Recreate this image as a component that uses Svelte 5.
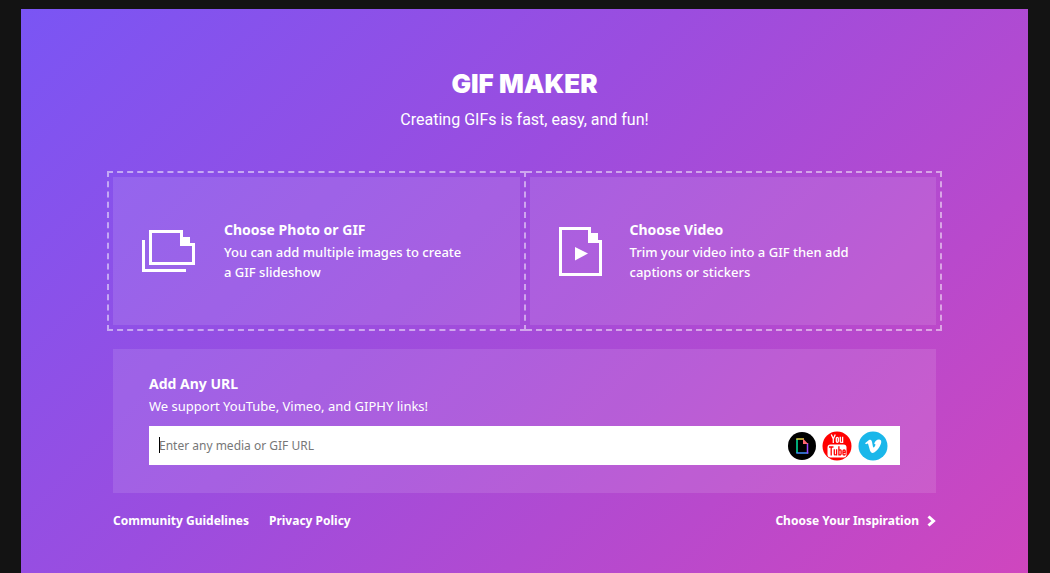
<script lang="ts">
	let url = $state('');
	let urlInput: HTMLInputElement;

	$effect(() => {
		urlInput.focus();
	});
</script>

<main class="page">
	<div class="maker">
		<header>
			<h1>GIF MAKER</h1>
			<p>Creating GIFs is fast, easy, and fun!</p>
		</header>

		<div class="choices">
			<div class="drop-zone">
				<button class="choice" type="button">
					<svg width="54" height="42" viewBox="0 0 54 42">
						<path d="M1.500 10v30.500H44" fill="none" stroke="#fff" stroke-width="3" />
						<path d="M8.500 1.500H39.500V14.500H51.500V33.500H8.500Z" fill="none" stroke="#fff" stroke-width="3" />
						<path d="M38 7h10v9H38z" fill="#fff" />
					</svg>
					<span class="choice-text">
						<strong>Choose Photo or GIF</strong>
						<span>You can add multiple images to create<br />a GIF slideshow</span>
					</span>
				</button>
			</div>
			<div class="drop-zone">
				<button class="choice" type="button">
					<svg width="43" height="49" viewBox="0 0 43 49">
						<path d="M1.500 1.500H30.500V14.500H41.500V47.500H1.500Z" fill="none" stroke="#fff" stroke-width="3" />
						<path d="M29 6h10v10H29z" fill="#fff" />
						<path d="M16 20l13 6.500l-13 7z" fill="#fff" />
					</svg>
					<span class="choice-text">
						<strong>Choose Video</strong>
						<span>Trim your video into a GIF then add<br />captions or stickers</span>
					</span>
				</button>
			</div>
		</div>

		<form class="url-panel">
			<label for="media-url">Add Any URL</label>
			<p>We support YouTube, Vimeo, and GIPHY links!</p>
			<div class="url-box">
				{#if !url}
					<span class="caret" aria-hidden="true"></span>
				{/if}
				<input
					id="media-url"
					type="text"
					placeholder="Enter any media or GIF URL"
					bind:value={url}
					bind:this={urlInput}
				/>
				<svg width="28" height="28" viewBox="0 0 28 28">
					<circle cx="14" cy="14" r="14" fill="#000" />
					<path d="M9 7v14" stroke="#00e6a0" stroke-width="1.500" />
					<path d="M8.300 21h12" stroke="#3f8cff" stroke-width="1.500" />
					<path d="M19.500 11v10.500" stroke="#9a45ff" stroke-width="1.500" />
					<path d="M8.300 7H16" stroke="#e8d94b" stroke-width="1.500" />
					<path d="M15 6.500l5.200 5.500H15z" fill="#ff6670" />
				</svg>
				<svg width="30" height="30" viewBox="0 0 30 30">
					<circle cx="15" cy="15" r="14.500" fill="#f00" />
					<rect x="5.500" y="13.500" width="19" height="13" rx="3" fill="#fff" />
					<g fill="none" stroke="#fff" stroke-width="1.300">
						<path d="M9.300 3.500l2 4.500l2-4.500M11.300 7.500v4.500" />
						<rect x="14.300" y="6.300" width="2" height="5" rx="1" />
						<path d="M18.300 5.800v4.700q0 1.500 2.200 0.500M20.600 5.800v6.200" />
					</g>
					<g fill="none" stroke="#f00" stroke-width="1.300">
						<path d="M7 16h4.500M9.200 16v8.500" />
						<path d="M12.300 18.200v4.800q0 1.500 2 0.500M14.600 18.200v6.300" />
						<path d="M16.900 15.300v9.200M16.900 19.300q2.200-1 2.200 0.500v3q0 1.500-2.200 0.900" />
						<path d="M21 21.300h2.200v-1.300q0-1-1.100-1t-1.100 1v3q0 1 1.100 1t1.100-1v-.6" />
					</g>
				</svg>
				<svg width="30" height="30" viewBox="0 0 30 30">
					<circle cx="15" cy="15" r="14.500" fill="#1ab7ea" />
					<path d="M7 12.200l4-3.200c2-1 2.700.2 3.100 2.300l.8 4.200c.4 1.500 1 1.300 1.800 0 1-1.600 1.300-2.800-.5-2.600.6-3 2.700-4.700 5.100-4.500 2 .2 2.400 2 1.600 4.400-1.200 3.500-4.200 7.300-6.700 8.700-2 1-3.400.3-4.200-2l-1.800-6.300c-.3-1-.9-.8-2.100 0z" fill="#fff" />
				</svg>
			</div>
		</form>

		<footer>
			<nav>
				<a href="#guidelines">Community Guidelines</a>
				<a href="#privacy">Privacy Policy</a>
			</nav>
			<a class="inspiration" href="#inspiration">
				Choose Your Inspiration
				<svg width="9" height="12" viewBox="0 0 9 12">
					<path d="M1.500 1.500L6.500 6L1.500 10.500" fill="none" stroke="#fff" stroke-width="3" />
				</svg>
			</a>
		</footer>
	</div>
</main>

<style>
	:global(body) {
		background: #131313;
	}

	.page {
		box-sizing: border-box;
		min-height: calc(100vh - 9px);
		margin: 9px 22px 0 21px;
		padding: 57px 24px 40px;
		background: linear-gradient(135deg, #7a55f4 0%, #9b4ddf 42%, #cf46be 100%);
		color: #fff;
		font-family: 'Noto Sans', 'Open Sans', sans-serif;
	}

	.maker {
		max-width: 823px;
		margin: 0 auto;
	}

	header {
		text-align: center;
	}

	h1 {
		margin: 0;
		font-family: Inter, sans-serif;
		font-size: 26px;
		font-weight: 900;
		line-height: 36px;
	}

	header p {
		margin: 0;
		font-family: Roboto, sans-serif;
		font-size: 16px;
		line-height: 36px;
	}

	.choices {
		display: flex;
		margin: 33px -6px 18px;
	}

	.drop-zone {
		flex: 1;
		padding: 4px;
		border: 2px dashed rgba(255, 255, 255, 0.5);
	}

	.drop-zone + .drop-zone {
		border-left: none;
	}

	.choice {
		display: flex;
		align-items: center;
		gap: 28px;
		width: 100%;
		height: 148px;
		padding: 0 29px;
		border: none;
		background: rgba(255, 255, 255, 0.11);
		color: inherit;
		font: inherit;
		text-align: left;
		cursor: pointer;
	}

	.choice svg {
		flex: none;
	}

	.choice-text {
		padding-bottom: 2px;
		font-size: 13px;
		font-weight: 500;
		line-height: 20px;
	}

	.choice-text strong {
		display: block;
		font-size: 14px;
		font-weight: 700;
		line-height: 24px;
	}

	.url-panel {
		padding: 23px 36px 28px;
		background: rgba(255, 255, 255, 0.11);
	}

	label {
		display: block;
		font-size: 14px;
		font-weight: 700;
		line-height: 24px;
	}

	.url-panel p {
		margin: 0 0 10px;
		font-size: 13px;
		line-height: 20px;
	}

	.url-box {
		position: relative;
		display: flex;
		align-items: center;
		gap: 6px;
		height: 39px;
		padding: 0 12px 0 10px;
		background: #fff;
	}

	.caret {
		position: absolute;
		top: 11px;
		left: 10px;
		width: 1px;
		height: 16px;
		background: #000;
	}

	input {
		flex: 1;
		min-width: 0;
		padding: 0;
		border: none;
		outline: none;
		background: none;
		color: #222;
		caret-color: transparent;
		font: inherit;
		font-size: 12px;
	}

	input:not(:placeholder-shown) {
		caret-color: auto;
	}

	input::placeholder {
		color: #777;
	}

	footer {
		display: flex;
		justify-content: space-between;
		margin-top: 18px;
		font-size: 12px;
		font-weight: 700;
		line-height: 20px;
	}

	nav {
		display: flex;
		gap: 20px;
	}

	a {
		color: inherit;
		text-decoration: none;
	}

	.inspiration {
		display: flex;
		align-items: center;
		gap: 8px;
	}
</style>
